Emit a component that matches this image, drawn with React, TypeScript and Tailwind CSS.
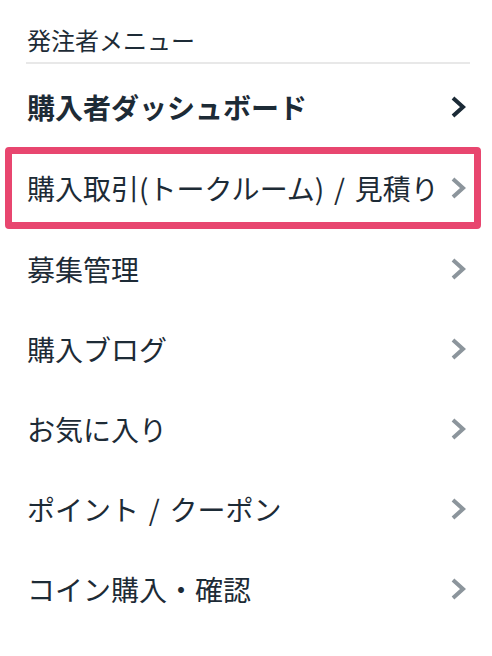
import React from "react";

const items = [
  { label: "購入者ダッシュボード", bold: true },
  { label: "購入取引(トークルーム) / 見積り", highlight: true },
  { label: "募集管理" },
  { label: "購入ブログ" },
  { label: "お気に入り" },
  { label: "ポイント / クーポン" },
  { label: "コイン購入・確認" },
];

function Chevron({ dark }: { dark?: boolean }) {
  return (
    <svg width="15" height="22" viewBox="0 0 15 22" className="shrink-0">
      <polyline
        points="2,2 12,11 2,20"
        fill="none"
        stroke={dark ? "#1b2a36" : "#8c959c"}
        strokeWidth={4}
        strokeLinejoin="miter"
      />
    </svg>
  );
}

export default function App() {
  return (
    <div
      className="w-full min-h-screen bg-white pt-[24px] pl-[26px] pr-[22px] text-[#1d2b36] [word-spacing:3.5px]"
      style={{ fontFamily: '"Noto Sans CJK JP", "Noto Sans", sans-serif' }}
    >
      <div className="text-[24px] leading-[32px] pl-[1px]">発注者メニュー</div>
      <div className="mt-[6px] h-[2px] bg-[#e8e8e8]" />
      <ul className="mt-[3px]">
        {items.map((item) =>
          item.highlight ? (
            <li
              key={item.label}
              className="-ml-[21px] -mr-[11px] h-[82px] flex items-center justify-between border-[7px] border-[#e8466f] rounded-[4px] pl-[15px] pr-[8px]"
            >
              <span className="text-[28px] leading-none whitespace-nowrap">{item.label}</span>
              <Chevron />
            </li>
          ) : (
            <li
              key={item.label}
              className="h-[80px] flex items-center justify-between pl-[1px] pr-[4px]"
            >
              <span
                className={`text-[28px] leading-none whitespace-nowrap ${
                  item.bold ? "font-bold" : ""
                }`}
              >
                {item.label}
              </span>
              <Chevron dark={item.bold} />
            </li>
          )
        )}
      </ul>
    </div>
  );
}
